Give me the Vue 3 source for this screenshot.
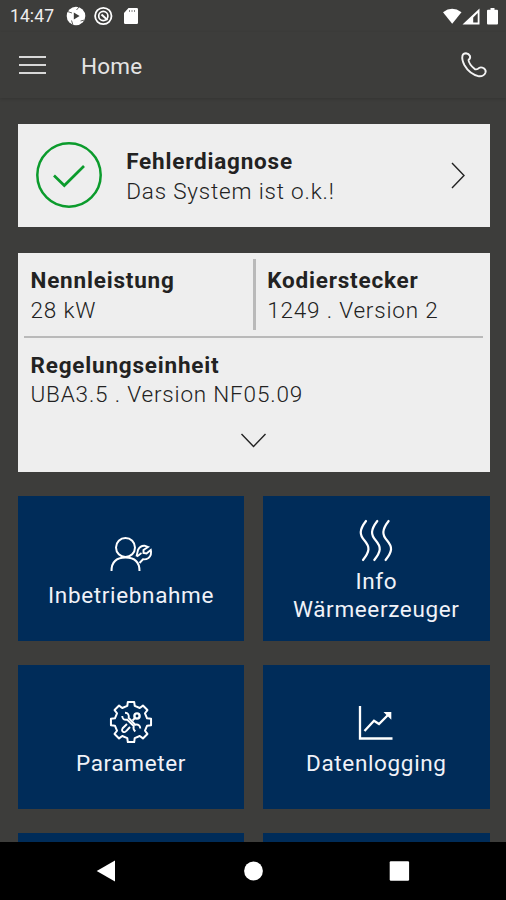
<template>
  <div class="screen">
    <header class="status-bar">
      <span class="clock">14:47</span>
      <svg class="status-left" viewBox="0 0 74 22">
        <circle cx="10" cy="11" r="9.3" fill="#fff" />
        <path d="M7.8 7.5l5.8 3.5-5.8 3.5z" fill="#3d3d3b" />
        <path d="M1.5 6.5l4.5 1.5M7 20l-1.5-4.5M18.5 15l-4 1M13 2l-2.5 3" stroke="#3d3d3b" stroke-width="0.8" />
        <circle cx="37.3" cy="11" r="8.2" fill="none" stroke="#fff" stroke-width="1.8" />
        <circle cx="37.3" cy="11" r="4.6" fill="none" stroke="#fff" stroke-width="1.7" />
        <path d="M35.5 9.5l6 5.5" fill="none" stroke="#fff" stroke-width="2" />
        <path d="M62.5 3h8.3q1.2 0 1.2 1.2v13.6q0 1.2-1.2 1.2H59.2q-1.2 0-1.2-1.2V8z" fill="#fff" />
        <path d="M63.5 5v2M66 5v2M68.5 5v2" stroke="#888" stroke-width="1" />
      </svg>
      <svg class="status-right" viewBox="0 0 58 22">
        <path d="M1 7.2Q10 .3 19.5 7.2L10.2 18.8z" fill="#fff" />
        <path fill-rule="evenodd" d="M37.5 3.5V19.5H20.5zM35.7 8V17.5H31.2V12.5z" fill="#fff" />
        <path d="M46 4.8h2.5V3h4v1.8H55q1 0 1 1v12.7q0 1-1 1h-9q-1 0-1-1V5.8q0-1 1-1z" fill="#fff" />
      </svg>
    </header>

    <nav class="app-bar">
      <button class="menu" aria-label="Menü">
        <span></span><span></span><span></span>
      </button>
      <h1>Home</h1>
      <svg class="phone" viewBox="0 0 28 28" fill="none" stroke="#f4f4f4" stroke-width="1.9" stroke-linejoin="round">
        <path d="M2.5 4.5Q3.2 2.3 6 2.2Q8.8 2.5 10 5Q10.7 7.3 8.5 9Q9 13.5 15 18.3Q17.5 18.8 19 17Q21 15.7 23.8 17.3Q26.3 19.2 25.5 21.5Q24 25.5 19 25.3Q9.5 23 4.5 14.2Q1.5 8.5 2.5 4.5z" />
      </svg>
    </nav>

    <main class="content">
      <section class="card diagnosis">
        <svg class="ok" viewBox="0 0 66 66" fill="none" stroke="#0b9b2c">
          <circle cx="33" cy="33" r="31.7" stroke-width="2.5" />
          <path d="M18 33.5L28.3 43.5L48 24" stroke-width="2.7" />
        </svg>
        <div class="entry">
          <strong>Fehlerdiagnose</strong>
          <span>Das System ist o.k.!</span>
        </div>
        <svg class="chevron-right" viewBox="0 0 16 28" fill="none" stroke="#222" stroke-width="1.4">
          <path d="M2 2L14 14.5L2 27" />
        </svg>
      </section>

      <section class="card system">
        <div class="row">
          <div class="entry power">
            <strong>Nennleistung</strong>
            <span>28 kW</span>
          </div>
          <div class="entry plug">
            <strong>Kodierstecker</strong>
            <span>1249 . Version 2</span>
          </div>
        </div>
        <div class="entry unit">
          <strong>Regelungseinheit</strong>
          <span>UBA3.5 . Version NF05.09</span>
        </div>
        <svg class="chevron-down" viewBox="0 0 28 16" fill="none" stroke="#222" stroke-width="1.4">
          <path d="M1.5 2L13.5 14.5L25.5 2" />
        </svg>
      </section>

      <section class="tiles">
        <div v-for="tile in tiles" :key="tile.icon" class="tile">
          <svg viewBox="0 0 48 48" fill="none" stroke="#fff" stroke-width="2">
            <g v-if="tile.icon === 'service'">
              <circle cx="18.5" cy="17.5" r="9.5" />
              <path d="M4.5 41Q4.5 27.5 18.5 27.5Q32.5 27.5 32.5 41" />
              <path d="M29.5 26.5L31 20Q33 15.5 37.5 15.7L41 17L36.5 20L36.5 23L39.5 23.5L43.8 20Q45 25 41.5 28Q39 29.7 36 29.3L32.5 33" stroke-width="1.9" />
              <path d="M30 26.5L34.5 23" stroke-width="1.6" />
            </g>
            <g v-else-if="tile.icon === 'heat'" stroke-linecap="round" stroke-width="2.2">
              <path d="M14 5C7 14 7.5 19 12.5 24.5C18 31 18 35 11 44" />
              <path d="M25.3 5C18.3 14 18.8 19 23.8 24.5C29.3 31 29.3 35 22.3 44" />
              <path d="M36.6 5C29.6 14 30.1 19 35.1 24.5C40.6 31 40.6 35 33.6 44" />
            </g>
            <g v-else-if="tile.icon === 'parameter'">
              <path :d="gearPath" stroke-linejoin="round" />
              <g stroke-width="1.9">
                <path d="M18 14.8Q22.5 15 21.7 20L28.2 26.7Q33 25.7 33.3 30.5M28.3 33.5Q25.8 31 26.7 28L20.3 21.7Q15.5 22.5 15.2 18" />
                <circle cx="30" cy="18" r="2.6" stroke-width="2.4" />
                <path d="M25.5 22.5L28 20M20 26L15.7 30.2Q14.2 32.7 16.2 33.8Q18 34.8 19.5 32.8L23 29" />
              </g>
            </g>
            <g v-else-if="tile.icon === 'chart'">
              <path d="M8 8V40.5H40.5" stroke-width="2.3" />
              <path d="M12.5 33L22 22.8L27 26L37.5 15.5" stroke-width="2.3" />
              <path d="M31.5 14H39.3V21.8z" fill="#fff" stroke="none" />
            </g>
          </svg>
          <p><span v-for="line in tile.lines" :key="line">{{ line }}</span></p>
        </div>
      </section>
    </main>

    <footer class="nav-bar">
      <svg viewBox="0 0 22 22" fill="#fff"><path d="M.7 11L19 .5V21.5z" /></svg>
      <svg viewBox="0 0 22 22" fill="#fff"><circle cx="11.5" cy="11" r="9.4" /></svg>
      <svg viewBox="0 0 22 22" fill="#fff"><rect x="1.7" y="1.3" width="19.4" height="19.4" rx="1.2" /></svg>
    </footer>
  </div>
</template>

<script setup>
const tiles = [
  { icon: 'service', lines: ['Inbetriebnahme'] },
  { icon: 'heat', lines: ['Info', 'Wärmeerzeuger'] },
  { icon: 'parameter', lines: ['Parameter'] },
  { icon: 'chart', lines: ['Datenlogging'] },
  { icon: 'more-left', lines: [] },
  { icon: 'more-right', lines: [] }
]

// eight teeth, each given by angle offset (degrees) and radius
const profile = [[-13, 16.5], [-9, 20.3], [9, 20.3], [13, 16.5]]

const gearPath = Array.from({ length: 8 }, (_, i) => i * 45)
  .flatMap(base => profile.map(([offset, r]) => {
    const a = (base + offset) * Math.PI / 180
    return `${(24 + r * Math.cos(a)).toFixed(2)} ${(24 + r * Math.sin(a)).toFixed(2)}`
  }))
  .join('L')
  .replace(/^/, 'M') + 'z'
</script>

<style>
body {
  margin: 0;
  background: #3d3d3b;
}
</style>

<style scoped>
.screen {
  width: 506px;
  height: 900px;
  display: flex;
  flex-direction: column;
  overflow: hidden;
  background: #3d3d3b;
  font-family: Roboto, "Noto Sans", sans-serif;
}

.screen svg {
  display: block;
  flex: none;
}

.status-bar {
  display: flex;
  align-items: center;
  flex: none;
  height: 32px;
  padding: 0 6px 0 10px;
  box-sizing: border-box;
}

.clock {
  width: 56px;
  font-size: 17.5px;
  letter-spacing: 0.1px;
  color: #eee;
}

.status-left {
  width: 74px;
  height: 22px;
}

.status-right {
  width: 58px;
  height: 22px;
  margin-left: auto;
}

.app-bar {
  display: flex;
  align-items: center;
  flex: none;
  height: 66px;
  padding: 0 18px 0 19px;
  box-sizing: border-box;
  box-shadow: 0 1px 3px rgba(0, 0, 0, 0.15);
}

.menu {
  display: flex;
  flex-direction: column;
  gap: 6px;
  width: 27px;
  padding: 0;
  border: 0;
  background: none;
}

.menu span {
  height: 2.3px;
  background: #d8d8d8;
}

h1 {
  margin: 1px 0 0 35px;
  font-size: 22.5px;
  font-weight: 400;
  line-height: 30px;
  letter-spacing: 0.2px;
  color: #e4e4e4;
}

.phone {
  width: 28px;
  height: 28px;
  margin-left: auto;
}

.content {
  flex: 1;
  min-height: 0;
  overflow: hidden;
  padding: 25.5px 16.3px 0 17.7px;
}

.card {
  box-sizing: border-box;
  background: #eee;
  color: #222;
}

.diagnosis {
  display: flex;
  align-items: center;
  height: 103.5px;
  padding: 0 24px 0 18.5px;
}

.ok {
  width: 66px;
  height: 66px;
}

.entry {
  display: flex;
  flex-direction: column;
  font-size: 22.5px;
  line-height: 29.5px;
  white-space: nowrap;
}

.entry strong {
  font-weight: 700;
  letter-spacing: 0.8px;
}

.entry span {
  font-weight: 300;
  letter-spacing: 0.82px;
}

.diagnosis .entry {
  margin-left: 24px;
  padding-top: 3px;
}

.chevron-right {
  width: 16px;
  height: 28px;
  margin-left: auto;
}

.system {
  height: 219px;
  margin-top: 25.5px;
  padding: 6px 6.5px 0;
}

.row {
  display: grid;
  grid-template-columns: 228.5px 1fr;
  height: 77px;
  border-bottom: 2px solid #b9b9b9;
}

.row .entry {
  height: 71px;
  padding-top: 7.8px;
  box-sizing: border-box;
}

.power {
  padding-left: 6.3px;
}

.plug {
  padding-left: 11.5px;
  border-left: 3px solid #b9b9b9;
}

.unit {
  padding: 13.3px 0 0 6.3px;
}

.chevron-down {
  width: 28px;
  height: 16px;
  margin: 22px auto 0;
}

.tiles {
  display: grid;
  grid-template-columns: 1fr 1fr;
  grid-auto-rows: 144.5px;
  gap: 24px 18.5px;
  margin-top: 24.5px;
}

.tile {
  display: flex;
  flex-direction: column;
  align-items: center;
  justify-content: center;
  gap: 3px;
  padding-top: 1.6px;
  box-sizing: border-box;
  background: #002c59;
  color: #f0f2f8;
}

.tile svg {
  width: 48px;
  height: 48px;
}

.tile p {
  display: flex;
  flex-direction: column;
  align-items: center;
  margin: 0;
  font-size: 22.5px;
  line-height: 28px;
  letter-spacing: 0.65px;
}

.nav-bar {
  display: flex;
  align-items: center;
  justify-content: space-between;
  flex: none;
  height: 58px;
  padding: 0 96px;
  box-sizing: border-box;
  background: #000;
}

.nav-bar svg {
  width: 22px;
  height: 22px;
}
</style>
